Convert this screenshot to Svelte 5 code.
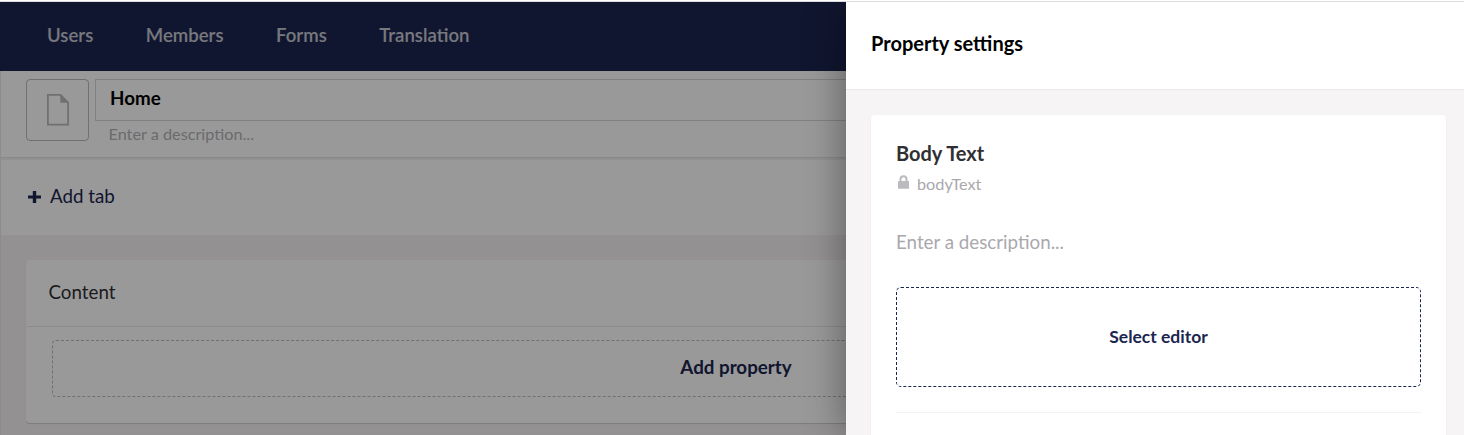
<script>
  const sections = ['Users', 'Members', 'Forms', 'Translation'];
</script>

<div class="window">
  <div class="app">
    <nav>
      {#each sections as section}
        <a href="#{section}">{section}</a>
      {/each}
    </nav>

    <main>
      <header class="editor-header">
        <div class="icon-box">
          <svg width="22" height="32" viewBox="0 0 22 32">
            <path d="M.9 .9H13.5L21.1 8.5V30.6H.9Z" fill="none" stroke="#bbbabf" stroke-width="1.8" />
            <path d="M13.3 0L22 8.7H13.3Z" fill="#bbbabf" />
          </svg>
        </div>
        <div class="names">
          <div class="name">Home</div>
          <div class="desc">Enter a description...</div>
        </div>
      </header>

      <div class="tabs">
        <svg width="13" height="12" viewBox="0 0 13 12"><path d="M0 4.5H4.8V0H8.2V4.5H13V7.5H8.2V12H4.8V7.5H0Z" fill="#1b264f" /></svg>
        <span>Add tab</span>
      </div>

      <section class="group">
        <h2>Content</h2>
        <div class="add-property">Add property</div>
      </section>
    </main>
  </div>

  <div class="backdrop"></div>

  <aside>
    <header class="panel-header">Property settings</header>
    <div class="panel-body">
      <div class="settings">
        <h3>Body Text</h3>
        <div class="alias">
          <svg width="11" height="14" viewBox="0 0 11 14">
            <path d="M2.5 7V4.2a3 3 0 0 1 6 0V7" fill="none" stroke="#bbbabf" stroke-width="2" />
            <rect x="0" y="6" width="11" height="7.7" rx=".4" fill="#bbbabf" />
          </svg>
          <span>bodyText</span>
        </div>
        <div class="settings-desc">Enter a description...</div>
        <div class="select-editor">Select editor</div>
        <div class="rule"></div>
      </div>
    </div>
  </aside>
</div>

<style>
  :global(body) { margin: 0; background: #fff; }
  * { box-sizing: border-box; }
  .window {
    position: relative;
    height: 435px;
    padding-top: 1px;
    overflow: hidden;
    font-family: Lato, sans-serif;
    font-size: 18.75px;
    line-height: 24px;
    color: #303033;
  }
  .app { border-top: 1px solid #dadce0; height: 434px; display: flex; flex-direction: column; }
  nav {
    flex: none;
    height: 69px;
    display: flex;
    align-items: center;
    gap: 52.5px;
    padding: 0 0 4px 47px;
    background: #1d2650;
  }
  nav a { color: #fff; opacity: .75; text-decoration: none; font-weight: 600; font-size: 18.6px; }
  main { flex: 1; background: #f7f2f3; border-left: 1px solid #e9e9eb; }
  .editor-header {
    height: 88px;
    display: flex;
    gap: 6px;
    padding: 8px 25px 0;
    background: #fff;
    border-bottom: 1px solid #f1f1f2;
    box-shadow: inset 0 -1px #e4e4e6;
  }
  .icon-box {
    width: 63px;
    height: 62px;
    display: flex;
    align-items: center;
    justify-content: center;
    border: 1px solid #bbbabf;
    border-radius: 4px;
  }
  .names { flex: 1; }
  .name {
    height: 42px;
    padding: 6px 14px;
    border: 1px solid #d8d7d9;
    color: #000;
    font-weight: 700;
  }
  .desc { padding: 1px 13.5px; color: #b3b2b7; font-size: 16.25px; }
  .tabs {
    height: 76px;
    display: flex;
    align-items: center;
    gap: 9px;
    padding-left: 27px;
    background: #fff;
    box-shadow: inset 0 1px #f4f4f5;
    color: #1b264f;
  }
  .tabs span { padding-bottom: 2px; }
  .group {
    height: 163px;
    margin: 25px 18px 0 25px;
    background: #fff;
    border-radius: 4px;
    box-shadow: 0 1px 1px rgba(0, 0, 0, .16);
  }
  h2 {
    height: 67px;
    margin: 0 1px;
    padding: 20px 21.5px;
    border-bottom: 1px solid #e9e9eb;
    font-size: 18.75px;
    font-weight: 400;
  }
  .add-property {
    height: 57px;
    margin: 13px 26px 0;
    padding-bottom: 3px;
    display: flex;
    align-items: center;
    justify-content: center;
    border: 1px dashed #bbbabf;
    border-radius: 4px;
    color: #1b264f;
    font-weight: 700;
  }
  .backdrop { position: absolute; inset: 2px 0 0; background: rgba(0, 0, 0, .4); }
  aside {
    position: absolute;
    top: 2px;
    right: 0;
    bottom: 0;
    width: 618px;
    display: flex;
    flex-direction: column;
    background: #f6f4f4;
    box-shadow: 0 0 38px rgba(0, 0, 0, .42);
    clip-path: inset(0 0 0 -60px);
  }
  .panel-header {
    height: 88px;
    padding: 29px 25px;
    background: #fff;
    border-bottom: 1px solid #e9e9eb;
    color: #000;
    font-size: 20px;
    font-weight: 700;
  }
  .panel-body { flex: 1; padding: 25px 18px 0 25px; overflow: hidden; }
  .settings {
    height: 420px;
    padding: 25px;
    background: #fff;
    border-radius: 4px;
    box-shadow: 0 1px 1px rgba(0, 0, 0, .16);
  }
  h3 { margin: 0; font-size: 20px; line-height: 26px; font-weight: 700; }
  .alias { display: flex; align-items: center; gap: 8px; height: 24px; margin-top: 6px; padding-left: 2px; color: #a9a8ad; font-size: 16.25px; }
  .alias svg { margin-top: -4px; }
  .settings-desc { margin-top: 34px; color: #a9a8ad; }
  .select-editor {
    height: 100px;
    margin-top: 33px;
    display: flex;
    align-items: center;
    justify-content: center;
    border: 1px dashed #1b264f;
    border-radius: 5px;
    color: #1b264f;
    font-size: 17.5px;
    font-weight: 700;
  }
  .rule { margin-top: 25px; border-top: 1px solid #f3f3f5; }
</style>
